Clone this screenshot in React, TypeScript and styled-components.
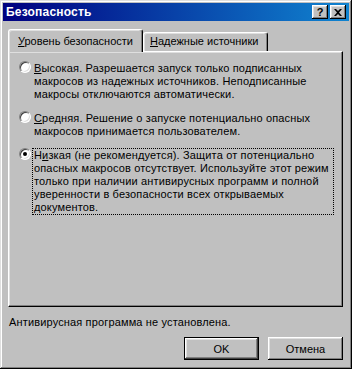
import styled, { createGlobalStyle } from 'styled-components';

const GlobalStyle = createGlobalStyle`
  html, body {
    margin: 0;
    padding: 0;
    background: #c0c0c0;
  }

  body {
    font-family: 'Liberation Sans', Arial, sans-serif;
    font-size: 11px;
    color: #000;
  }
`;

const Window = styled.div`
  width: 352px;
  height: 369px;
  box-sizing: border-box;
  padding: 3px;
  display: flex;
  flex-direction: column;
  background: #c0c0c0;
  box-shadow: inset -1px -1px #000, inset 1px 1px #dfdfdf,
    inset -2px -2px #808080, inset 2px 2px #fff;
`;

const TitleBar = styled.div`
  height: 18px;
  flex: none;
  display: flex;
  align-items: center;
  padding: 0 3px;
  background: linear-gradient(to right, #000080, #1084d0);
`;

const Title = styled.span`
  flex: 1;
  color: #fff;
  font-weight: bold;
  font-size: 12px;
  letter-spacing: 0.2px;
`;

const CaptionButtons = styled.div`
  display: flex;
  gap: 2px;
`;

const CaptionButton = styled.button`
  width: 16px;
  height: 14px;
  padding: 0;
  border: none;
  display: flex;
  align-items: center;
  justify-content: center;
  background: #c0c0c0;
  color: #000;
  font: bold 11px 'Liberation Sans', Arial, sans-serif;
  box-shadow: inset -1px -1px #000, inset 1px 1px #fff,
    inset -2px -2px #808080, inset 2px 2px #dfdfdf;
`;

const Body = styled.div`
  flex: 1;
  display: flex;
  flex-direction: column;
  padding: 8px 6px 0 5px;
`;

const TabStrip = styled.div`
  height: 22px;
  display: flex;
  align-items: flex-end;
`;

const Tab = styled.div<{ $active?: boolean; $width: number }>`
  position: relative;
  z-index: ${(p) => (p.$active ? 1 : 0)};
  box-sizing: border-box;
  width: ${(p) => p.$width}px;
  height: ${(p) => (p.$active ? 23 : 19)}px;
  margin-bottom: ${(p) => (p.$active ? -1 : 0)}px;
  padding: ${(p) => (p.$active ? '5px 0 0 9px' : '2px 0 0 6px')};
  line-height: 13px;
  white-space: nowrap;
  background: #c0c0c0;
  border-top: 1px solid #fff;
  border-left: 1px solid #fff;
  border-right: 1px solid #000;
  border-radius: 3px 3px 0 0;
  box-shadow: inset -1px 0 #808080, inset 1px 1px #dfdfdf;
`;

const Key = styled.span`
  text-decoration: underline;
`;

const Panel = styled.div`
  box-sizing: border-box;
  height: 256px;
  padding: 9px 8px 0 10px;
  display: flex;
  flex-direction: column;
  gap: 9px;
  border: 1px solid;
  border-color: #fff #000 #000 #fff;
  box-shadow: inset -1px -1px #808080, inset 1px 1px #dfdfdf;
`;

const Option = styled.div`
  display: flex;
  align-items: flex-start;
  gap: 1px;
`;

const Radio = styled.span<{ $checked?: boolean }>`
  box-sizing: border-box;
  width: 12px;
  height: 12px;
  flex: none;
  display: flex;
  align-items: center;
  justify-content: center;
  border-radius: 50%;
  background: #fff;
  border: 1px solid;
  border-color: #808080 #fff #fff #808080;
  box-shadow: inset 1px 1px #404040, inset -1px -1px #dfdfdf;

  &::after {
    content: '';
    display: ${(p) => (p.$checked ? 'block' : 'none')};
    width: 4px;
    height: 4px;
    border-radius: 50%;
    background: #000;
  }
`;

const Label = styled.div<{ $focused?: boolean }>`
  flex: ${(p) => (p.$focused ? 1 : 'none')};
  padding: 0 1px;
  line-height: 13px;
  letter-spacing: 0.15px;
  white-space: nowrap;
  border: 1px ${(p) => (p.$focused ? 'dotted #000' : 'solid transparent')};
`;

const Status = styled.div`
  margin-top: 9px;
  line-height: 13px;
  letter-spacing: 0.15px;
  padding-left: 1px;
`;

const ButtonRow = styled.div`
  margin-top: 8px;
  display: flex;
  justify-content: flex-end;
  gap: 9px;
`;

const Button = styled.button<{ $default?: boolean }>`
  box-sizing: border-box;
  width: 75px;
  height: 23px;
  padding: 0;
  background: #c0c0c0;
  color: #000;
  font: 11px 'Liberation Sans', Arial, sans-serif;
  border: ${(p) => (p.$default ? '1px solid #000' : 'none')};
  box-shadow: ${(p) =>
    p.$default
      ? 'inset -1px -1px #404040, inset 1px 1px #fff, inset -2px -2px #808080, inset 2px 2px #dfdfdf'
      : 'inset -1px -1px #000, inset 1px 1px #fff, inset -2px -2px #808080, inset 2px 2px #dfdfdf'};
`;

function CloseGlyph() {
  return (
    <svg width="8" height="7" viewBox="0 0 8 7" role="presentation">
      <path d="M0 0h2l2 2 2-2h2L5 3.5 8 7H6L4 5 2 7H0l3-3.5z" fill="#000" />
    </svg>
  );
}

function App() {
  return (
    <>
      <GlobalStyle />
      <Window>
        <TitleBar>
          <Title>Безопасность</Title>
          <CaptionButtons>
            <CaptionButton>?</CaptionButton>
            <CaptionButton>
              <CloseGlyph />
            </CaptionButton>
          </CaptionButtons>
        </TitleBar>
        <Body>
          <TabStrip>
            <Tab $active $width={135}>
              <Key>У</Key>ровень безопасности
            </Tab>
            <Tab $width={125}>
              <Key>Н</Key>адежные источники
            </Tab>
          </TabStrip>
          <Panel>
            <Option>
              <Radio />
              <Label>
                <Key>В</Key>ысокая. Разрешается запуск только подписанных
                <br />
                макросов из надежных источников. Неподписанные
                <br />
                макросы отключаются автоматически.
              </Label>
            </Option>
            <Option>
              <Radio />
              <Label>
                <Key>С</Key>редняя. Решение о запуске потенциально опасных
                <br />
                макросов принимается пользователем.
              </Label>
            </Option>
            <Option>
              <Radio $checked />
              <Label $focused>
                Н<Key>и</Key>зкая (не рекомендуется). Защита от потенциально
                <br />
                опасных макросов отсутствует. Используйте этот режим
                <br />
                только при наличии антивирусных программ и полной
                <br />
                уверенности в безопасности всех открываемых
                <br />
                документов.
              </Label>
            </Option>
          </Panel>
          <Status>Антивирусная программа не установлена.</Status>
          <ButtonRow>
            <Button $default>OK</Button>
            <Button>Отмена</Button>
          </ButtonRow>
        </Body>
      </Window>
    </>
  );
}

export default App;
